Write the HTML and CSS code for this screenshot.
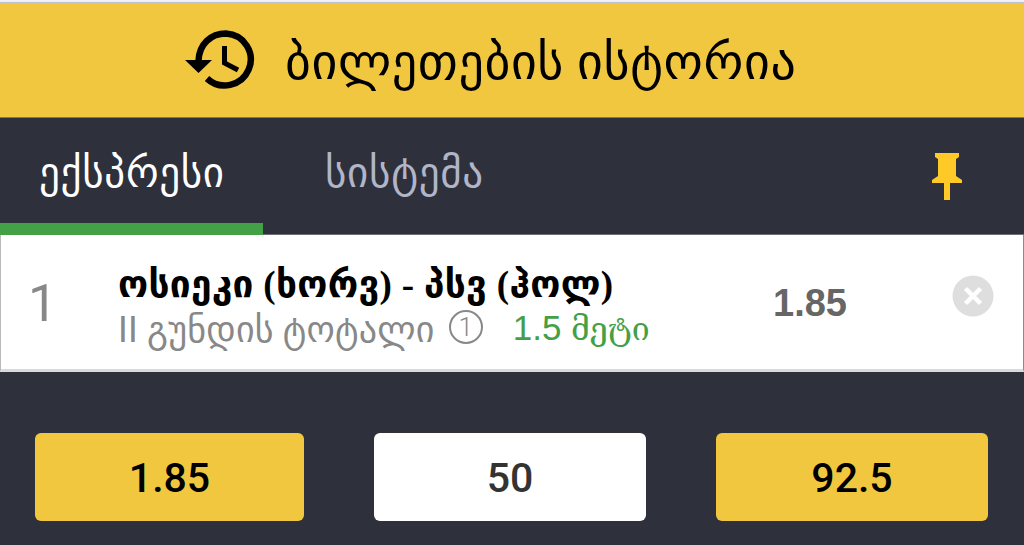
FILE: index.html
```
<!DOCTYPE html>
<html lang="ka">

<head>
    <meta charset="UTF-8">
    <meta name="viewport" content="width=device-width, initial-scale=1.0">
    <title>ბილეთების ისტორია</title>
    <link rel="stylesheet" href="styles.css">
</head>

<body>

    <div class="betslip">
        <header class="history">
            <svg class="history-icon" width="72" height="60" viewBox="0 0 72 60">
                <path d="M13.500 31C14 14 26 3.500 41 3.500A26 26 0 1 1 22 48.500" fill="none" stroke="#000" stroke-width="6.500" />
                <path d="M0 30H27L13.500 43Z" />
                <path d="M39.500 16V33L53 40" fill="none" stroke="#000" stroke-width="5" />
            </svg>
            <span class="history-title">ბილეთების ისტორია</span>
        </header>

        <nav class="tabs">
            <button class="tab active"><span class="tab-express">ექსპრესი</span></button>
            <button class="tab"><span class="tab-system">სისტემა</span></button>
            <svg class="pin" width="30" height="48" viewBox="0 0 30 48">
                <path d="M3 0H27V4L24 6V23L30 27V30H18V47H12V30H0V27L6 23V6L3 4Z" fill="#ffca28" />
            </svg>
        </nav>

        <div class="bet">
            <div class="bet-number">1</div>
            <div class="bet-info">
                <div class="bet-match">ოსიეკი (ხორვ) - პსვ (ჰოლ)</div>
                <div class="bet-market">
                    <span class="market-name">II გუნდის ტოტალი</span>
                    <span class="market-badge">1</span>
                    <span class="market-pick">1.5 <span class="pick-word">მეტი</span></span>
                </div>
            </div>
            <div class="bet-odd">1.85</div>
            <svg class="bet-remove" width="42" height="42" viewBox="0 0 42 42">
                <circle cx="21" cy="21" r="20.500" fill="#dedede" />
                <path d="M13.500 13.500L28.500 28.500M28.500 13.500L13.500 28.500" stroke="#fff" stroke-width="4.500" />
            </svg>
        </div>

        <div class="totals">
            <div class="box">1.85</div>
            <div class="box stake">50</div>
            <div class="box">92.5</div>
        </div>
    </div>

</body>

</html>
```
FILE: styles.css
```
* {
    box-sizing: border-box;
    margin: 0;
    padding: 0;
}

body {
    height: 545px;
    overflow: hidden;
    background-color: #2e303c;
    font-family: Roboto, "DejaVu Sans", sans-serif;
}

.betslip {
    border-top: 2px solid #eef0f4;
}

.history {
    display: flex;
    align-items: center;
    height: 116px;
    padding-left: 185px;
    background-color: #f2c740;
    border-top: 1px solid #bdc1cd;
    border-bottom: 1px solid #8f7a3a;
}

.history-icon {
    flex: none;
}

.history-title {
    margin-left: 28px;
    padding-top: 3px;
    color: #000;
    font-size: 50px;
    letter-spacing: 0.6px;
    white-space: nowrap;
}

.tabs {
    display: flex;
    height: 117px;
    border-bottom: 1px solid #6c6e78;
}

.tab {
    width: 263px;
    height: 117px;
    padding: 5px 0 0 39px;
    border: none;
    border-bottom: 12px solid transparent;
    background: none;
    color: #b0b5c8;
    font-family: inherit;
    font-size: 41px;
    letter-spacing: 0.7px;
    text-align: left;
    white-space: nowrap;
}

.tab.active {
    border-bottom-color: #43a047;
    color: #fff;
}

.tab-system {
    margin-left: 23px;
}

.pin {
    margin: 35px 62px 0 auto;
}

.bet {
    display: flex;
    height: 137px;
    background-color: #fff;
    border-right: 1px solid #8a8b90;
    border-bottom: 3px solid #d9dadc;
    border-left: 1px solid #b9b9bb;
}

.bet-number {
    width: 117px;
    padding: 38px 0 0 27px;
    color: #888;
    font-size: 52px;
    line-height: 61px;
}

.bet-info {
    width: 655px;
    padding-top: 27px;
    white-space: nowrap;
}

.bet-match {
    color: #000;
    font-family: "Liberation Serif", "DejaVu Sans", serif;
    font-size: 37px;
    font-weight: bold;
    letter-spacing: 0.3px;
    line-height: 46px;
}

.bet-market {
    display: flex;
    align-items: center;
    height: 44px;
    color: #888;
    font-size: 36px;
}

.market-name {
    letter-spacing: 0.2px;
}

.market-badge {
    width: 34px;
    height: 34px;
    margin: -6px 30px 0 14px;
    border: 2px solid #888;
    border-radius: 50%;
    font-size: 26px;
    font-weight: 300;
    line-height: 30px;
    text-align: center;
}

.market-pick {
    margin-top: -3px;
    color: #43a047;
    font-family: "Liberation Sans", sans-serif;
    line-height: 40px;
    font-size: 35px;
}

.pick-word {
    font-family: "DejaVu Serif", serif;
    font-size: 32px;
}

.bet-odd {
    width: 179px;
    padding-top: 46px;
    color: #666;
    font-family: "Liberation Sans", sans-serif;
    font-size: 38px;
    font-weight: bold;
    line-height: 45px;
}

.bet-remove {
    margin-top: 40px;
}

.totals {
    display: grid;
    grid-template-columns: 269px 272px 272px;
    gap: 70px;
    padding: 61px 35px 0;
}

.box {
    height: 88px;
    border-radius: 6px;
    background-color: #f2c740;
    color: #000;
    font-size: 41px;
    font-weight: 500;
    line-height: 91px;
    text-align: center;
}

.stake {
    background-color: #fff;
    color: #333;
}
```
